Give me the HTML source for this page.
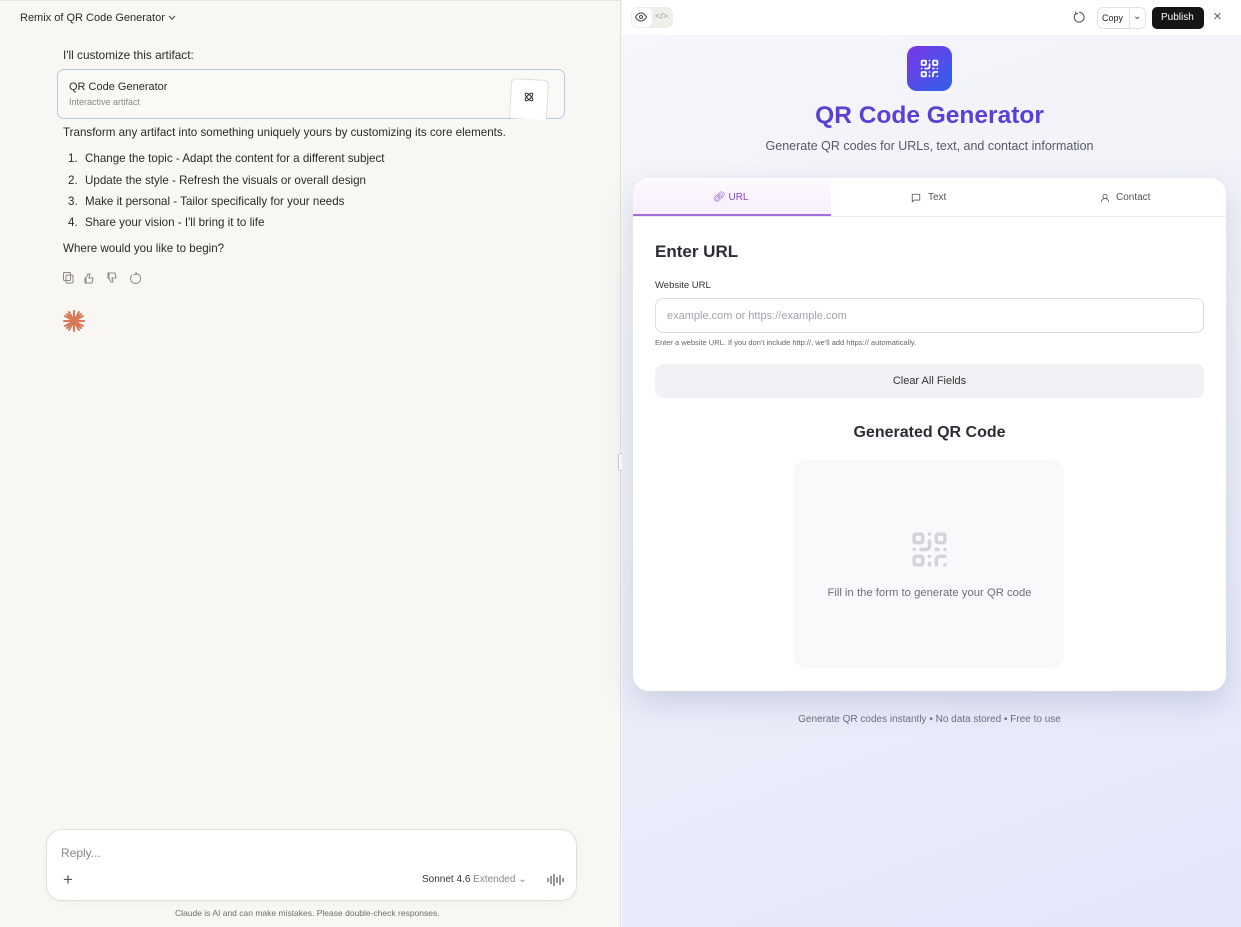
<!DOCTYPE html>
<html><head><meta charset="utf-8"><style>
*{box-sizing:border-box;margin:0;padding:0}
body{width:1241px;height:927px;overflow:hidden;font-family:"Liberation Sans",sans-serif;position:relative;background:#f8f7f4}
.left{position:absolute;left:0;top:0;width:621px;height:927px;background:#f8f7f3;border-right:1px solid #e2e0da;border-top:1px solid #e6e4de}
.t{position:absolute;white-space:nowrap;color:#2b2a27}
.right{position:absolute;left:622px;top:0;width:619px;height:927px;background:linear-gradient(160deg,#f6f7fb 0%,#eff1f8 45%,#e3e6fb 100%)}
.bar{position:absolute;left:0;top:0;width:619px;height:35px;background:#fff}
.card{position:absolute;left:11px;top:178px;width:593px;height:513px;background:#fff;border-radius:16px;box-shadow:0 12px 30px rgba(60,70,120,.18);overflow:hidden}
svg{display:block}
</style></head><body>
<div class="left">
 <div class="t" style="left:20px;top:11px;font-size:11px">Remix of QR Code Generator</div>
 <svg style="position:absolute;left:167px;top:13px" width="10" height="8" viewBox="0 0 10 8"><path d="M2 2l3 3 3-3" stroke="#555" fill="none" stroke-width="1.2"/></svg>
 <div class="t" style="left:63px;top:47px;font-size:11.8px">I'll customize this artifact:</div>
 <div style="position:absolute;left:57px;top:68px;width:508px;height:50px;border:1px solid #b9cbe0;border-radius:7px;background:#faf9f6"></div>
 <div class="t" style="left:69px;top:80px;font-size:11px">QR Code Generator</div>
 <div class="t" style="left:69px;top:96px;font-size:9px;color:#8a8880">Interactive artifact</div>
 <div style="position:absolute;left:510px;top:78px;width:38px;height:40px;border:1px solid #dedbd4;border-bottom:none;border-radius:5px 5px 0 0;background:#fff;transform:rotate(3deg)"></div>
 <svg style="position:absolute;left:523px;top:90px" width="12" height="12" viewBox="0 0 24 24" fill="none" stroke="#333" stroke-width="2"><ellipse cx="12" cy="12" rx="10" ry="4" transform="rotate(45 12 12)"/><ellipse cx="12" cy="12" rx="10" ry="4" transform="rotate(-45 12 12)"/></svg>
 <div class="t" style="left:63px;top:125px;font-size:11.6px">Transform any artifact into something uniquely yours by customizing its core elements.</div>
 <div class="t" style="left:68px;top:151px;font-size:11.6px">1.</div><div class="t" style="left:85px;top:151px;font-size:11.6px">Change the topic - Adapt the content for a different subject</div>
 <div class="t" style="left:68px;top:173px;font-size:11.6px">2.</div><div class="t" style="left:85px;top:173px;font-size:11.6px">Update the style - Refresh the visuals or overall design</div>
 <div class="t" style="left:68px;top:194px;font-size:11.6px">3.</div><div class="t" style="left:85px;top:194px;font-size:11.6px">Make it personal - Tailor specifically for your needs</div>
 <div class="t" style="left:68px;top:215px;font-size:11.6px">4.</div><div class="t" style="left:85px;top:215px;font-size:11.6px">Share your vision - I'll bring it to life</div>
 <div class="t" style="left:63px;top:241px;font-size:11.6px">Where would you like to begin?</div>
 <svg style="position:absolute;left:62px;top:270px" width="84" height="14" viewBox="0 0 84 14" fill="none" stroke="#8a8880" stroke-width="1"><rect x="1.5" y="1.5" width="7" height="8" rx="1"/><rect x="4" y="4" width="7" height="8" rx="1"/><path d="M24 12h6l1-5h-4l1-4-2 0-2 4v5zM24 7h-1v5h1"/><path d="M47 2h6l1 5h-4l1 4-2 0-2-4v-5zM47 7h-1v-5h1"/><path d="M70 4a5 5 0 1 0 4-1.5M74 1v2.5h-2.5"/></svg>
 <svg style="position:absolute;left:62px;top:308px" width="24" height="24" viewBox="0 0 24 24" stroke="#d97757" stroke-width="2" stroke-linecap="round"><path d="M12 2v20M2 12h20M5 5l14 14M19 5L5 19M7 3l10 18M17 3L7 21M3 7l18 10M21 7L3 17"/></svg>
 <div style="position:absolute;left:46px;top:828px;width:531px;height:72px;background:#fff;border:1px solid #e2e0da;border-radius:16px;box-shadow:0 2px 6px rgba(0,0,0,.04)"></div>
 <div class="t" style="left:61px;top:845px;font-size:12px;color:#8a8880">Reply...</div>
 <div class="t" style="left:63px;top:869px;font-size:17px;color:#555;font-weight:300">+</div>
 <div class="t" style="left:422px;top:873px;font-size:10px;color:#333">Sonnet 4.6 <span style="color:#8a8880">Extended ⌄</span></div>
 <svg style="position:absolute;left:546px;top:872px" width="18" height="14" viewBox="0 0 18 14" stroke="#555" stroke-width="1.2"><path d="M2 5v4M5 3v8M8 1v12M11 4v6M14 2v10M17 5v4"/></svg>
 <div class="t" style="left:175px;top:907px;font-size:8.5px;color:#6f6d66">Claude is AI and can make mistakes. Please double-check responses.</div>
 <div style="position:absolute;left:618px;top:452px;width:6px;height:18px;border:1px solid #ccc;border-radius:3px;background:#fff"></div>
</div>
<div class="right">
 <div class="bar">
  <div style="position:absolute;left:9px;top:7px;width:42px;height:21px;border-radius:6px;background:#f0eee9"></div>
  <div style="position:absolute;left:10px;top:8px;width:20px;height:19px;border-radius:5px;background:#fff"></div>
  <svg style="position:absolute;left:13px;top:12px" width="12" height="10" viewBox="0 0 24 20" fill="none" stroke="#444" stroke-width="2"><path d="M1 10s4-8 11-8 11 8 11 8-4 8-11 8S1 10 1 10z"/><circle cx="12" cy="10" r="3"/></svg>
  <div class="t" style="left:33px;top:11px;font-size:9px;color:#999">&lt;/&gt;</div>
  <svg style="position:absolute;left:450px;top:11px" width="13" height="13" viewBox="0 0 24 24" fill="none" stroke="#555" stroke-width="2"><path d="M7 5a9 9 0 1 0 6-2.5M7 1v4h4"/></svg>
  <div style="position:absolute;left:475px;top:7px;width:49px;height:22px;border:1px solid #e2e2e2;border-radius:6px"></div>
  <div style="position:absolute;left:507px;top:7px;width:1px;height:22px;background:#e2e2e2"></div>
  <div class="t" style="left:480px;top:13px;font-size:9px;color:#222">Copy</div>
  <div class="t" style="left:511px;top:11px;font-size:10px;color:#444">⌄</div>
  <div style="position:absolute;left:530px;top:7px;width:52px;height:22px;background:#151515;border-radius:5px"></div>
  <div class="t" style="left:539px;top:12px;font-size:10px;color:#fff">Publish</div>
  <div class="t" style="left:591px;top:8px;font-size:15px;color:#666">×</div>
 </div>
 <div style="position:absolute;left:285px;top:46px;width:45px;height:45px;border-radius:10px;background:linear-gradient(135deg,#7b35e8,#2f62ea)"></div>
 <svg style="position:absolute;left:297px;top:58px" width="21" height="21" viewBox="0 0 24 24" fill="none" stroke="#fff" stroke-width="2" stroke-linecap="round"><rect x="3" y="3" width="5" height="5" rx="1"/><rect x="16" y="3" width="5" height="5" rx="1"/><rect x="3" y="16" width="5" height="5" rx="1"/><path d="M21 16h-3a2 2 0 0 0-2 2v3M21 21v.01M12 7v3a2 2 0 0 1-2 2H7M3 12h.01M12 3h.01M12 16v.01M16 12h1M21 12v.01M12 21v-1"/></svg>
 <div class="t" style="left:0;width:615px;text-align:center;top:102px;font-size:24.5px;font-weight:bold;color:#5b3fd6">QR Code Generator</div>
 <div class="t" style="left:0;width:615px;text-align:center;top:139px;font-size:12.5px;color:#555a66">Generate QR codes for URLs, text, and contact information</div>
 <div class="card">
  <div style="position:absolute;left:0;top:0;width:198px;height:38px;background:linear-gradient(#fdfaff,#f7effd);border-bottom:2px solid #a46ee0"></div>
  <div style="position:absolute;left:0;top:38px;width:593px;height:1px;background:#ececf0"></div>
  <div class="t" style="left:80px;top:14px;font-size:10px;color:#8e44c8">🔗︎ URL</div>
  <svg style="position:absolute;left:278px;top:15px" width="10" height="10" viewBox="0 0 24 24" fill="none" stroke="#555" stroke-width="2"><path d="M3 3h18v14H8l-5 4z"/></svg>
  <div class="t" style="left:295px;top:14px;font-size:10px;color:#555">Text</div>
  <svg style="position:absolute;left:467px;top:15px" width="10" height="10" viewBox="0 0 24 24" fill="none" stroke="#555" stroke-width="2"><circle cx="12" cy="8" r="5"/><path d="M3 22a9 9 0 0 1 18 0"/></svg>
  <div class="t" style="left:483px;top:14px;font-size:10px;color:#555">Contact</div>
  <div class="t" style="left:22px;top:64px;font-size:17px;font-weight:bold;color:#2a2d34">Enter URL</div>
  <div class="t" style="left:22px;top:102px;font-size:9.5px;color:#333">Website URL</div>
  <div style="position:absolute;left:22px;top:120px;width:549px;height:35px;border:1px solid #dcdde2;border-radius:8px"></div>
  <div class="t" style="left:34px;top:132px;font-size:11px;color:#a0a3aa">example.com or https://example.com</div>
  <div class="t" style="left:22px;top:160px;font-size:7.5px;color:#666">Enter a website URL. If you don't include http://, we'll add https:// automatically.</div>
  <div style="position:absolute;left:22px;top:186px;width:549px;height:34px;background:#f1f2f5;border-radius:8px"></div>
  <div class="t" style="left:0;width:593px;text-align:center;top:197px;font-size:11px;color:#333">Clear All Fields</div>
  <div class="t" style="left:0;width:593px;text-align:center;top:246px;font-size:16px;font-weight:bold;color:#2a2d34">Generated QR Code</div>
  <div style="position:absolute;left:161px;top:282px;width:270px;height:208px;background:#f8f9fb;border-radius:12px"></div>
  <svg style="position:absolute;left:276px;top:351px" width="41" height="41" viewBox="0 0 24 24" fill="none" stroke="#d2d4d9" stroke-width="2" stroke-linecap="round"><rect x="3" y="3" width="5" height="5" rx="1"/><rect x="16" y="3" width="5" height="5" rx="1"/><rect x="3" y="16" width="5" height="5" rx="1"/><path d="M21 16h-3a2 2 0 0 0-2 2v3M21 21v.01M12 7v3a2 2 0 0 1-2 2H7M3 12h.01M12 3h.01M12 16v.01M16 12h1M21 12v.01M12 21v-1"/></svg>
  <div class="t" style="left:0;width:593px;text-align:center;top:409px;font-size:11.3px;color:#6b6f78">Fill in the form to generate your QR code</div>
 </div>
 <div class="t" style="left:0;width:615px;text-align:center;top:714px;font-size:10px;color:#6b6f78">Generate QR codes instantly • No data stored • Free to use</div>
</div>
</body></html>
